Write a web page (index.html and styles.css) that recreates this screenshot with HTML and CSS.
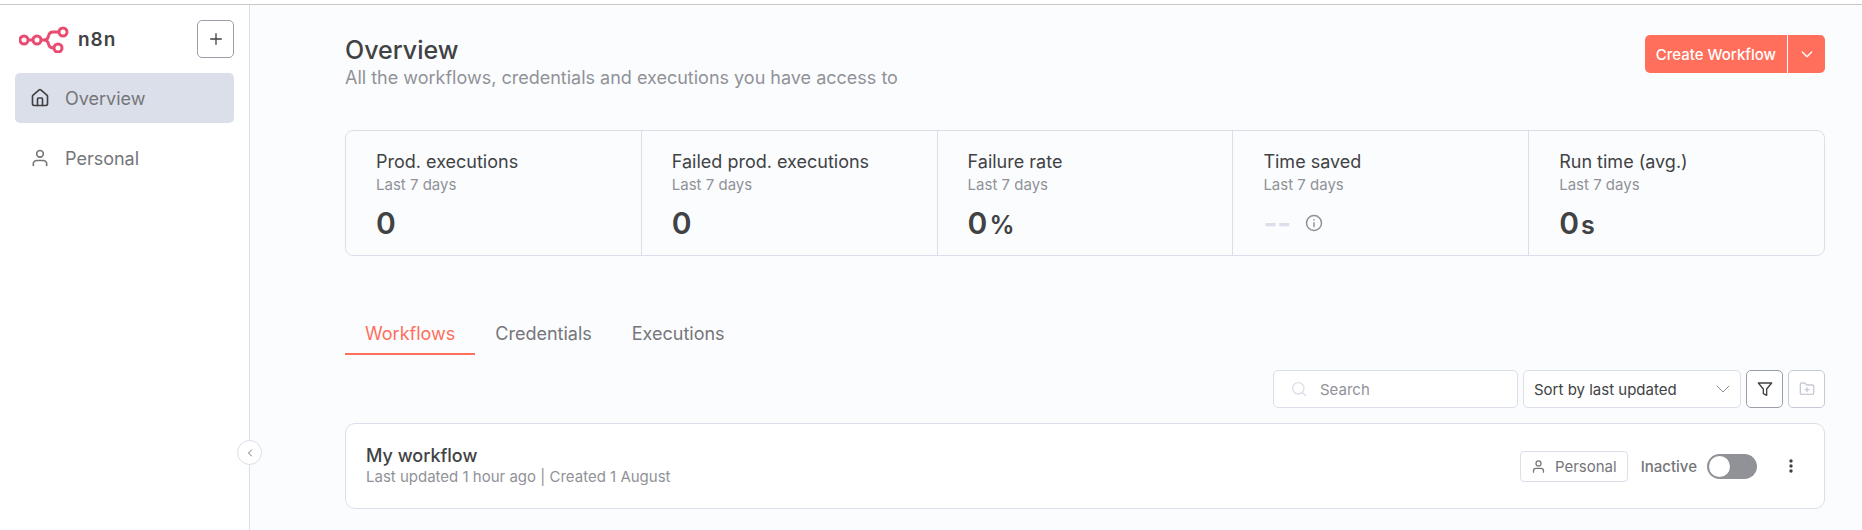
FILE: index.html
```
<!DOCTYPE html>
<html lang="en">
<head>
    <meta charset="UTF-8">
    <meta name="viewport" content="width=device-width, initial-scale=1.0">
    <title>Overview - n8n</title>
    <link rel="stylesheet" href="styles.css">
</head>
<body>
    <div class="app">
        <aside class="sidebar">
            <div class="sidebar-header">
                <a class="brand" href="#">
                    <svg class="brand-logo" viewBox="0 0 50 28" width="50" height="28">
                        <circle cx="5" cy="15" r="4"/>
                        <circle cx="18" cy="15" r="4"/>
                        <circle cx="44" cy="7" r="4"/>
                        <circle cx="39" cy="23" r="4"/>
                        <path d="M9 15h5M22 15h3c3 0 4-1.500 4.500-4S31.500 7 34 7h6M25 15c3 0 4 1.500 4.500 4s1.500 4 5.500 4"/>
                    </svg>
                    <span>n8n</span>
                </a>
                <button type="button" class="btn-square" aria-label="Add">
                    <svg class="icon" viewBox="0 0 24 24" width="16" height="16"><path d="M4 12h16M12 4v16"/></svg>
                </button>
            </div>
            <nav class="menu">
                <a class="menu-item active" href="#">
                    <svg class="icon" viewBox="0 0 24 24" width="20" height="20">
                        <path d="M15 21v-8a1 1 0 0 0-1-1h-4a1 1 0 0 0-1 1v8"/>
                        <path d="M3 10a2 2 0 0 1 .709-1.528l7-5.999a2 2 0 0 1 2.582 0l7 5.999A2 2 0 0 1 21 10v9a2 2 0 0 1-2 2H5a2 2 0 0 1-2-2z"/>
                    </svg>
                    <span>Overview</span>
                </a>
                <a class="menu-item" href="#">
                    <svg class="icon" viewBox="0 0 24 24" width="20" height="20">
                        <circle cx="12" cy="7" r="4"/>
                        <path d="M4 21v-2a4 4 0 0 1 4-4h8a4 4 0 0 1 4 4v2"/>
                    </svg>
                    <span>Personal</span>
                </a>
            </nav>
            <button type="button" class="collapse" aria-label="Collapse sidebar">
                <svg class="icon" viewBox="0 0 24 24" width="12" height="12"><path d="M15 6l-6 6 6 6"/></svg>
            </button>
        </aside>

        <main class="content">
            <header class="page-header">
                <div>
                    <h1>Overview</h1>
                    <p>All the workflows, credentials and executions you have access to</p>
                </div>
                <div class="btn-group">
                    <button type="button" class="btn-main">Create Workflow</button>
                    <button type="button" class="btn-more" aria-label="More options">
                        <svg class="icon" viewBox="0 0 24 24" width="16" height="16"><path d="M5 9l7 7 7-7"/></svg>
                    </button>
                </div>
            </header>

            <ul class="stats">
                <li class="stat">
                    <strong>Prod. executions</strong>
                    <small>Last 7 days</small>
                    <div class="value">0</div>
                </li>
                <li class="stat">
                    <strong>Failed prod. executions</strong>
                    <small>Last 7 days</small>
                    <div class="value">0</div>
                </li>
                <li class="stat">
                    <strong>Failure rate</strong>
                    <small>Last 7 days</small>
                    <div class="value">0<em>%</em></div>
                </li>
                <li class="stat">
                    <strong>Time saved</strong>
                    <small>Last 7 days</small>
                    <div class="value empty">
                        <span>--</span>
                        <svg class="icon" viewBox="0 0 24 24" width="18" height="18"><circle cx="12" cy="12" r="10"/><path d="M12 16.500v-5M12 7.500v.5"/></svg>
                    </div>
                </li>
                <li class="stat">
                    <strong>Run time (avg.)</strong>
                    <small>Last 7 days</small>
                    <div class="value">0<em>s</em></div>
                </li>
            </ul>

            <nav class="tabs">
                <a class="tab active" href="#">Workflows</a>
                <a class="tab" href="#">Credentials</a>
                <a class="tab" href="#">Executions</a>
            </nav>

            <div class="toolbar">
                <label class="search">
                    <svg class="icon" viewBox="0 0 24 24" width="16" height="16"><circle cx="11" cy="11" r="8.500"/><path d="M17.500 17.500L22 22"/></svg>
                    <input type="text" placeholder="Search" aria-label="Search">
                </label>
                <div class="sort">
                    <select aria-label="Sort">
                        <option>Sort by last updated</option>
                        <option>Sort by last created</option>
                        <option>Sort by name (A-Z)</option>
                    </select>
                    <svg class="icon" viewBox="0 0 14 8" width="14" height="8"><path d="M1 1l6 6 6-6"/></svg>
                </div>
                <button type="button" class="btn-square" aria-label="Filters">
                    <svg class="icon" viewBox="0 0 24 24" width="16" height="16"><path d="M2 3h20l-7.500 9v9.500l-5-2.500v-7z"/></svg>
                </button>
                <button type="button" class="btn-square" aria-label="Add folder" disabled>
                    <svg class="icon" viewBox="0 0 24 24" width="16" height="16">
                        <path d="M12 10v6M9 13h6"/>
                        <path d="M20 20a2 2 0 0 0 2-2V8a2 2 0 0 0-2-2h-7.900a2 2 0 0 1-1.690-.9L9.600 3.900A2 2 0 0 0 7.930 3H4a2 2 0 0 0-2 2v13a2 2 0 0 0 2 2z"/>
                    </svg>
                </button>
            </div>

            <article class="card">
                <div class="card-text">
                    <h2>My workflow</h2>
                    <p>Last updated 1 hour ago | Created 1 August</p>
                </div>
                <span class="badge">
                    <svg class="icon" viewBox="0 0 24 24" width="15" height="15">
                        <circle cx="12" cy="7" r="4"/>
                        <path d="M4 21v-2a4 4 0 0 1 4-4h8a4 4 0 0 1 4 4v2"/>
                    </svg>
                    Personal
                </span>
                <label class="activator">
                    Inactive
                    <input type="checkbox" class="switch">
                </label>
                <button type="button" class="dots" aria-label="Actions">
                    <svg viewBox="0 0 4 14" width="4" height="14"><circle cx="2" cy="2" r="1.700"/><circle cx="2" cy="7" r="1.700"/><circle cx="2" cy="12" r="1.700"/></svg>
                </button>
            </article>
        </main>
    </div>
</body>
</html>
```
FILE: styles.css
```
* {
    box-sizing: border-box;
}
body {
    margin: 0;
    padding-top: 4px;
    font-family: Inter, "Liberation Sans", sans-serif;
    font-size: 15px;
    color: #414244;
    background-color: #fff;
}
h1, h2, p, ul {
    margin: 0;
    padding: 0;
}
a {
    color: inherit;
    text-decoration: none;
}
button, input, select {
    font-family: inherit;
    font-size: 15px;
}
button {
    padding: 0;
    cursor: pointer;
}
.icon {
    flex: none;
    fill: none;
    stroke: currentColor;
    stroke-width: 2;
    stroke-linecap: round;
    stroke-linejoin: round;
}
.app {
    display: flex;
    min-height: calc(100vh - 4px);
    border-top: 1px solid #c8c8ca;
}

/* sidebar */
.sidebar {
    position: relative;
    flex: none;
    width: 250px;
    padding: 15px;
    border-right: 1px solid #dbdfe7;
}
.sidebar-header {
    display: flex;
    justify-content: space-between;
    align-items: center;
}
.brand {
    display: flex;
    align-items: center;
    gap: 9px;
    padding-left: 4px;
    font-size: 19px;
    font-weight: 600;
    letter-spacing: 1px;
}
.brand-logo {
    fill: none;
    stroke: #ea4b71;
    stroke-width: 3;
}
.btn-square {
    display: flex;
    align-items: center;
    justify-content: center;
    width: 37px;
    height: 38px;
    color: #414244;
    background-color: #fff;
    border: 1px solid #9a9fab;
    border-radius: 5px;
}
.btn-square:disabled {
    color: #c6cad6;
    border-color: #c6cad6;
}
.menu {
    display: grid;
    gap: 10px;
    margin-top: 15px;
}
.menu-item {
    display: flex;
    align-items: center;
    gap: 15px;
    height: 50px;
    padding: 0 15px;
    font-size: 18px;
    color: #75767a;
    border-radius: 5px;
}
.menu-item.active {
    background-color: #dbdfe9;
}
.menu-item.active .icon {
    color: #414244;
}
.collapse {
    position: absolute;
    right: -13px;
    bottom: 65px;
    display: flex;
    align-items: center;
    justify-content: center;
    width: 25px;
    height: 25px;
    color: #75767a;
    background-color: #fff;
    border: 1px solid #dbdfe7;
    border-radius: 50%;
}

/* main content */
.content {
    flex: 1;
    padding: 30px 37px 15px 95px;
    background-color: #fbfcfe;
}
.page-header {
    display: flex;
    justify-content: space-between;
    align-items: flex-start;
}
.page-header h1 {
    font-size: 25px;
    font-weight: 500;
    line-height: 30px;
}
.page-header p {
    font-size: 18px;
    line-height: 26px;
    color: #909298;
}
.btn-group {
    display: flex;
    gap: 1px;
    height: 38px;
}
.btn-main, .btn-more {
    color: #fff;
    font-weight: 500;
    background-color: #ff6f5c;
    border: none;
}
.btn-main {
    padding: 0 11px;
    border-radius: 5px 0 0 5px;
}
.btn-more {
    display: flex;
    align-items: center;
    justify-content: center;
    width: 37px;
    border-radius: 0 5px 5px 0;
}

.stats {
    display: flex;
    margin-top: 39px;
    list-style: none;
    border: 1px solid #dbdfe9;
    border-radius: 8px;
}
.stat {
    flex: 1;
    display: flex;
    flex-direction: column;
    padding: 19px 30px 11px;
    border-right: 1px solid #dbdfe9;
}
.stat:last-child {
    border-right: none;
}
.stat strong {
    font-size: 18px;
    font-weight: 400;
    line-height: 24px;
}
.stat small {
    font-size: 15px;
    line-height: 22px;
    color: #909298;
}
.value {
    display: flex;
    align-items: baseline;
    gap: 2px;
    padding-top: 8px;
    font-size: 30px;
    font-weight: 600;
    line-height: 38px;
}
.value em {
    font-size: 25px;
    font-style: normal;
}
.value.empty {
    align-items: center;
    gap: 14px;
    color: #dbdfe9;
}
.value.empty .icon {
    color: #909298;
}

.tabs {
    display: flex;
    margin-top: 65px;
}
.tab {
    padding: 0 20px 6px;
    font-size: 18px;
    line-height: 26px;
    color: #75767a;
    border-bottom: 2px solid transparent;
}
.tab.active {
    color: #ff6f5c;
    border-color: #ff6f5c;
}

.toolbar {
    display: flex;
    justify-content: flex-end;
    gap: 5px;
    margin-top: 15px;
}
.search {
    display: flex;
    align-items: center;
    gap: 13px;
    width: 245px;
    height: 38px;
    padding: 0 17px;
    background-color: #fff;
    border: 1px solid #dbdfe9;
    border-radius: 5px;
}
.search .icon {
    color: #dbdfe9;
}
.search input {
    flex: 1;
    min-width: 0;
    padding: 0;
    border: none;
    outline: none;
    background: none;
}
.search input::placeholder {
    color: #909298;
}
.sort {
    position: relative;
    width: 218px;
}
.sort select {
    width: 100%;
    height: 38px;
    padding: 0 30px 0 10px;
    color: #414244;
    background-color: #fff;
    border: 1px solid #dbdfe9;
    border-radius: 5px;
    appearance: none;
}
.sort .icon {
    position: absolute;
    top: 15px;
    right: 11px;
    color: #909298;
    stroke-width: 1;
    pointer-events: none;
}

.card {
    display: flex;
    align-items: center;
    margin-top: 15px;
    padding: 21px 20px;
    background-color: #fff;
    border: 1px solid #dbdfe9;
    border-radius: 10px;
}
.card-text {
    flex: 1;
}
.card h2 {
    font-size: 18px;
    font-weight: 500;
    line-height: 22px;
}
.card p {
    line-height: 20px;
    color: #909298;
}
.badge {
    display: flex;
    align-items: center;
    gap: 9px;
    height: 31px;
    padding: 0 10px;
    color: #75767a;
    border: 1px solid #dbdfe9;
    border-radius: 4px;
}
.activator {
    display: flex;
    align-items: center;
    gap: 10px;
    margin-left: 13px;
    color: #75767a;
    font-weight: 500;
}
.switch {
    width: 50px;
    height: 25px;
    margin: 0;
    padding: 2px;
    background-color: #909298;
    border-radius: 13px;
    appearance: none;
    cursor: pointer;
}
.switch::before {
    content: "";
    display: block;
    width: 21px;
    height: 21px;
    background-color: #fff;
    border-radius: 50%;
}
.switch:checked {
    background-color: #29a568;
}
.switch:checked::before {
    margin-left: auto;
}
.dots {
    display: flex;
    align-items: center;
    justify-content: center;
    width: 38px;
    height: 38px;
    margin-left: 15px;
    margin-right: -6px;
    background: none;
    border: none;
    fill: #414244;
}
```
